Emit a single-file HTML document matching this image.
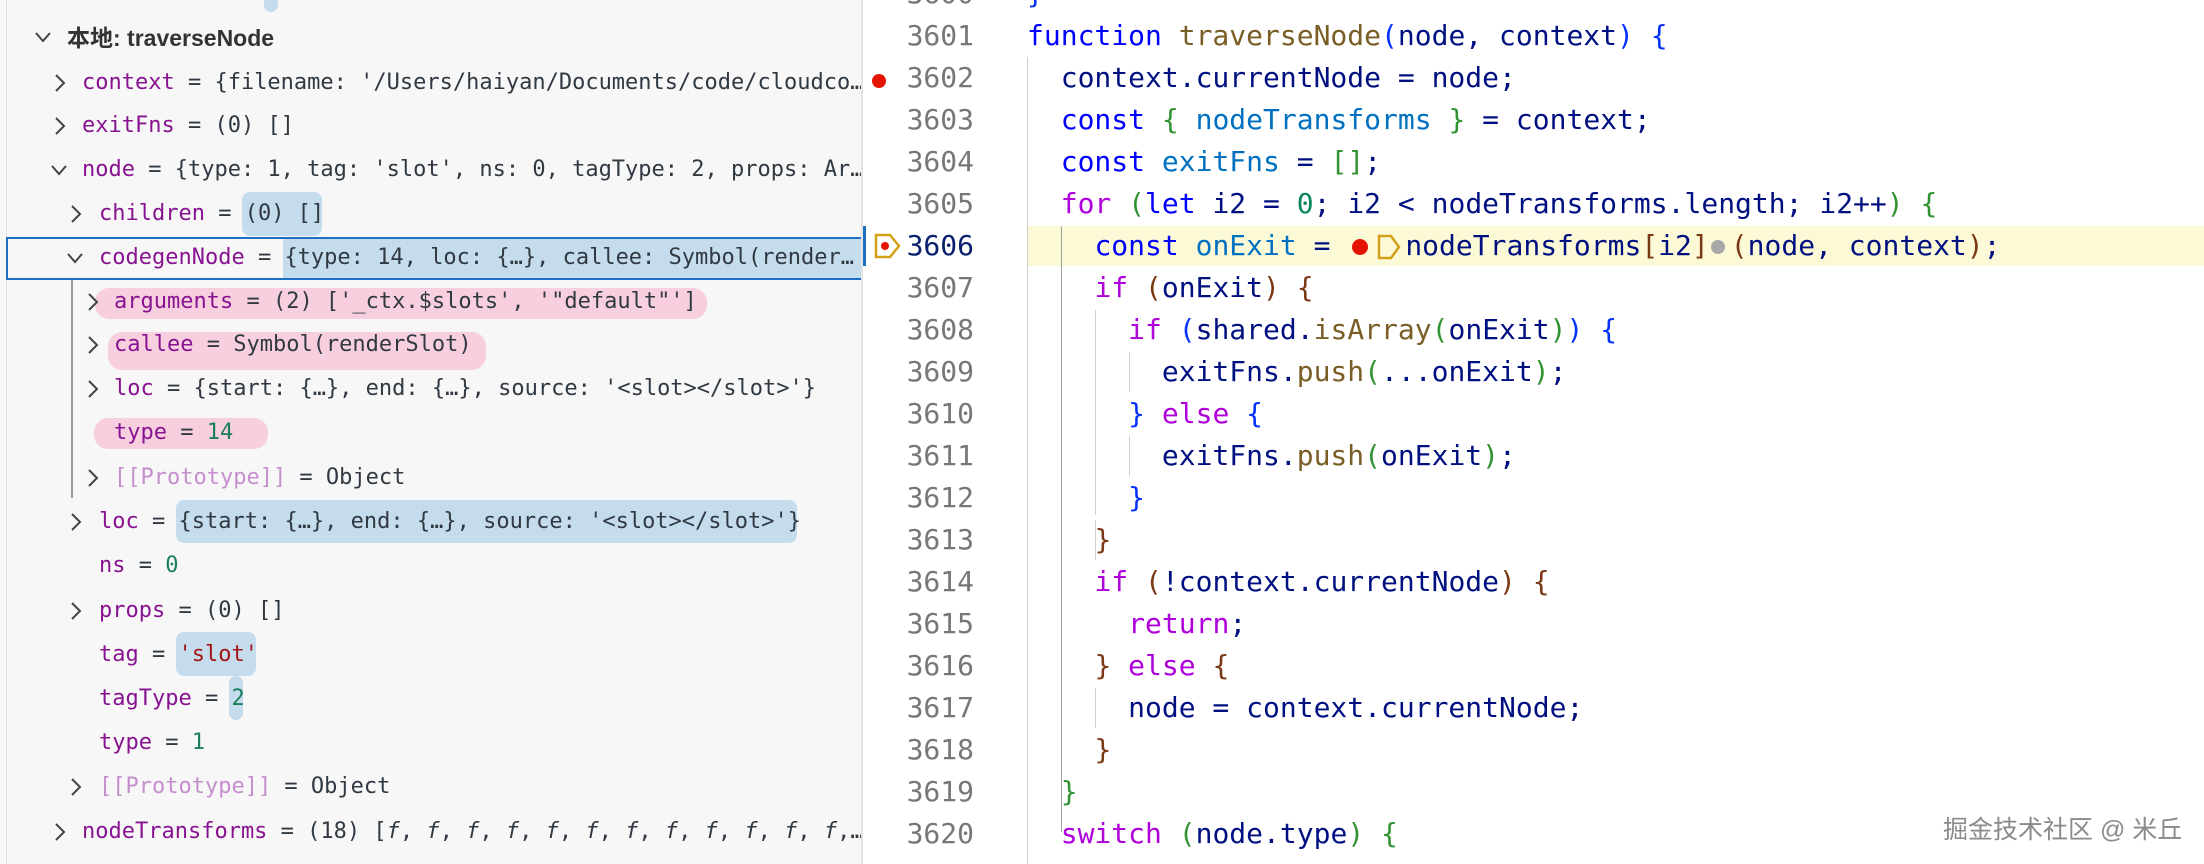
<!DOCTYPE html>
<html><head><meta charset="utf-8"><style>
*{margin:0;padding:0;box-sizing:border-box}
body{width:2204px;height:864px;overflow:hidden;background:#fff;position:relative;font-family:"DejaVu Sans Mono","Liberation Mono",monospace}
#left{position:absolute;left:0;top:0;width:863px;height:864px;background:#f7f7f7;border-right:2px solid #e4e4e4;overflow:hidden}
.r{position:absolute;height:44px;line-height:44px;font-size:22px;white-space:pre;color:#303942}
.n{color:#881391}.p{color:#c58fcd}.g{color:#1a7f5a}.s{color:#a31515}
.hl{position:absolute;background:#c5dced;border-radius:8px}
.pk{position:absolute;background:#f8cfdf;border-radius:14px}
.ch{position:absolute;width:14px;height:20px}
.code{position:absolute;left:1027px;font-size:28px;height:42px;line-height:42px;white-space:pre;color:#001080}
.ln{position:absolute;left:890px;width:84px;text-align:right;font-size:28px;height:42px;line-height:42px;color:#777}
.k{color:#0000ff}.c{color:#af00db}.f{color:#795e26}.v{color:#0070c1}.b1{color:#0431fa}.b2{color:#319331}.b3{color:#7b3814}.num{color:#098658}
.guide{position:absolute;width:1px;background:#d0d0d0}
</style></head><body>
<div id="left">
<div style="position:absolute;left:6px;top:0;width:1px;height:864px;background:#e0e0e0"></div>
<div class="hl" style="left:264px;top:-14px;width:14px;height:26px"></div>
<div class="r" style="left:67px;top:16px;font-family:'Liberation Sans','Noto Sans CJK SC',sans-serif;font-weight:bold;font-size:23px;color:#333">本地: traverseNode</div>
<svg class="ch" style="left:34px;top:30px;width:18px;height:14px" viewBox="0 0 18 14"><polyline points="2,3 9,11 16,3" fill="none" stroke="#444" stroke-width="2"/></svg>

<div class="hl" style="left:242px;top:192px;width:80px;height:44px"></div>
<div class="hl" style="left:283px;top:237px;width:580px;height:42px;border-radius:0"></div>
<div class="hl" style="left:176px;top:500px;width:621px;height:43px"></div>
<div class="hl" style="left:176px;top:632px;width:80px;height:44px"></div>
<div class="hl" style="left:229px;top:676px;width:14px;height:44px"></div>
<div class="pk" style="left:95px;top:288px;width:612px;height:31px"></div>
<div class="pk" style="left:108px;top:332px;width:378px;height:38px"></div>
<div class="pk" style="left:94px;top:418px;width:174px;height:31px"></div>
<div style="position:absolute;left:6px;top:237px;width:857px;height:43px;border:2px solid #1f6fc5"></div>
<div style="position:absolute;left:71px;top:280px;width:2px;height:218px;background:#9a9a9a"></div>

<div class="r" style="left:82px;top:61px"><span class="n">context</span> = {filename: '/Users/haiyan/Documents/code/cloudco…</div>
<div class="r" style="left:82px;top:104px"><span class="n">exitFns</span> = (0) []</div>
<div class="r" style="left:82px;top:148px"><span class="n">node</span> = {type: 1, tag: 'slot', ns: 0, tagType: 2, props: Ar…</div>
<div class="r" style="left:99px;top:192px"><span class="n">children</span> = (0) []</div>
<div class="r" style="left:99px;top:236px"><span class="n">codegenNode</span> = {type: 14, loc: {…}, callee: Symbol(render…</div>
<div class="r" style="left:114px;top:280px"><span class="n">arguments</span> = (2) ['_ctx.$slots', '"default"']</div>
<div class="r" style="left:114px;top:323px"><span class="n">callee</span> = Symbol(renderSlot)</div>
<div class="r" style="left:114px;top:367px"><span class="n">loc</span> = {start: {…}, end: {…}, source: '&lt;slot&gt;&lt;/slot&gt;'}</div>
<div class="r" style="left:114px;top:411px"><span class="n">type</span> = <span class="g">14</span></div>
<div class="r" style="left:114px;top:456px"><span class="p">[[Prototype]]</span> = Object</div>
<div class="r" style="left:99px;top:500px"><span class="n">loc</span> = {start: {…}, end: {…}, source: '&lt;slot&gt;&lt;/slot&gt;'}</div>
<div class="r" style="left:99px;top:544px"><span class="n">ns</span> = <span class="g">0</span></div>
<div class="r" style="left:99px;top:589px"><span class="n">props</span> = (0) []</div>
<div class="r" style="left:99px;top:633px"><span class="n">tag</span> = <span class="s">'slot'</span></div>
<div class="r" style="left:99px;top:677px"><span class="n">tagType</span> = <span class="g">2</span></div>
<div class="r" style="left:99px;top:721px"><span class="n">type</span> = <span class="g">1</span></div>
<div class="r" style="left:99px;top:765px"><span class="p">[[Prototype]]</span> = Object</div>
<div class="r" style="left:82px;top:810px"><span class="n">nodeTransforms</span> = (18) [<i>f</i>, <i>f</i>, <i>f</i>, <i>f</i>, <i>f</i>, <i>f</i>, <i>f</i>, <i>f</i>, <i>f</i>, <i>f</i>, <i>f</i>, <i>f</i>,…</div>

<svg class="ch" style="left:53px;top:73px" viewBox="0 0 14 20"><polyline points="3,2 11,10 3,18" fill="none" stroke="#444" stroke-width="2"/></svg>
<svg class="ch" style="left:53px;top:116px" viewBox="0 0 14 20"><polyline points="3,2 11,10 3,18" fill="none" stroke="#444" stroke-width="2"/></svg>
<svg class="ch" style="left:50px;top:163px;width:18px;height:14px" viewBox="0 0 18 14"><polyline points="2,3 9,11 16,3" fill="none" stroke="#444" stroke-width="2"/></svg>
<svg class="ch" style="left:69px;top:204px" viewBox="0 0 14 20"><polyline points="3,2 11,10 3,18" fill="none" stroke="#444" stroke-width="2"/></svg>
<svg class="ch" style="left:66px;top:251px;width:18px;height:14px" viewBox="0 0 18 14"><polyline points="2,3 9,11 16,3" fill="none" stroke="#444" stroke-width="2"/></svg>
<svg class="ch" style="left:86px;top:292px" viewBox="0 0 14 20"><polyline points="3,2 11,10 3,18" fill="none" stroke="#444" stroke-width="2"/></svg>
<svg class="ch" style="left:86px;top:335px" viewBox="0 0 14 20"><polyline points="3,2 11,10 3,18" fill="none" stroke="#444" stroke-width="2"/></svg>
<svg class="ch" style="left:86px;top:379px" viewBox="0 0 14 20"><polyline points="3,2 11,10 3,18" fill="none" stroke="#444" stroke-width="2"/></svg>
<svg class="ch" style="left:86px;top:468px" viewBox="0 0 14 20"><polyline points="3,2 11,10 3,18" fill="none" stroke="#444" stroke-width="2"/></svg>
<svg class="ch" style="left:69px;top:512px" viewBox="0 0 14 20"><polyline points="3,2 11,10 3,18" fill="none" stroke="#444" stroke-width="2"/></svg>
<svg class="ch" style="left:69px;top:601px" viewBox="0 0 14 20"><polyline points="3,2 11,10 3,18" fill="none" stroke="#444" stroke-width="2"/></svg>
<svg class="ch" style="left:69px;top:777px" viewBox="0 0 14 20"><polyline points="3,2 11,10 3,18" fill="none" stroke="#444" stroke-width="2"/></svg>
<svg class="ch" style="left:53px;top:822px" viewBox="0 0 14 20"><polyline points="3,2 11,10 3,18" fill="none" stroke="#444" stroke-width="2"/></svg>
</div>

<div style="position:absolute;left:1027px;top:226px;width:1177px;height:40px;background:#fcfad6"></div>
<div style="position:absolute;left:863px;top:226px;width:3px;height:40px;background:#1f6fc5"></div>
<div class="guide" style="left:1027px;top:57px;height:807px"></div>
<div class="guide" style="left:1061px;top:226px;height:606px;background:#a0a0a0"></div>
<div class="guide" style="left:1095px;top:310px;height:205px"></div>
<div class="guide" style="left:1095px;top:520px;height:40px"></div>
<div class="guide" style="left:1095px;top:688px;height:40px"></div>
<div class="guide" style="left:1129px;top:352px;height:40px"></div>
<div class="guide" style="left:1129px;top:436px;height:40px"></div>

<svg style="position:absolute;left:870px;top:72px" width="18" height="18"><circle cx="9" cy="9" r="7" fill="#e51400"/></svg>
<svg style="position:absolute;left:873px;top:232px" width="30" height="28" viewBox="0 0 30 28"><path d="M3 3 H17 L26 14 L17 25 H3 Z" fill="none" stroke="#d4a017" stroke-width="2.5"/><circle cx="12" cy="14" r="4" fill="#e51400"/></svg>

<div class="ln" style="top:-27px">3600</div>
<div class="ln" style="top:15px">3601</div>
<div class="ln" style="top:57px">3602</div>
<div class="ln" style="top:99px">3603</div>
<div class="ln" style="top:141px">3604</div>
<div class="ln" style="top:183px">3605</div>
<div class="ln" style="top:225px;color:#0b216f">3606</div>
<div class="ln" style="top:267px">3607</div>
<div class="ln" style="top:309px">3608</div>
<div class="ln" style="top:351px">3609</div>
<div class="ln" style="top:393px">3610</div>
<div class="ln" style="top:435px">3611</div>
<div class="ln" style="top:477px">3612</div>
<div class="ln" style="top:519px">3613</div>
<div class="ln" style="top:561px">3614</div>
<div class="ln" style="top:603px">3615</div>
<div class="ln" style="top:645px">3616</div>
<div class="ln" style="top:687px">3617</div>
<div class="ln" style="top:729px">3618</div>
<div class="ln" style="top:771px">3619</div>
<div class="ln" style="top:813px">3620</div>

<div class="code" style="top:-27px"><span class="b1">}</span></div>
<div class="code" style="top:15px"><span class="k">function</span> <span class="f">traverseNode</span><span class="b1">(</span>node, context<span class="b1">)</span> <span class="b1">{</span></div>
<div class="code" style="top:57px">  context.currentNode = node;</div>
<div class="code" style="top:99px">  <span class="k">const</span> <span class="b2">{</span> <span class="v">nodeTransforms</span> <span class="b2">}</span> = context;</div>
<div class="code" style="top:141px">  <span class="k">const</span> <span class="v">exitFns</span> = <span class="b2">[]</span>;</div>
<div class="code" style="top:183px">  <span class="c">for</span> <span class="b2">(</span><span class="k">let</span> i2 = <span class="num">0</span>; i2 &lt; nodeTransforms.length; i2++<span class="b2">)</span> <span class="b2">{</span></div>
<div class="code" style="top:225px">    <span class="k">const</span> <span class="v">onExit</span> = <span style="display:inline-block;width:28px;height:20px;vertical-align:middle;position:relative"><span style="position:absolute;left:5px;top:2px;width:16px;height:16px;border-radius:50%;background:#e51400"></span></span><svg width="30" height="28" viewBox="0 0 30 28" style="vertical-align:middle"><path d="M4 3 H16 L24 14 L16 25 H4 Z" fill="none" stroke="#d4a017" stroke-width="2.5"/></svg>nodeTransforms<span class="b3">[</span>i2<span class="b3">]</span><span style="display:inline-block;width:22px;height:20px;vertical-align:middle;position:relative"><span style="position:absolute;left:2px;top:3px;width:14px;height:14px;border-radius:50%;background:#a8a8a8"></span></span><span class="b3">(</span>node, context<span class="b3">)</span>;</div>
<div class="code" style="top:267px">    <span class="c">if</span> <span class="b3">(</span>onExit<span class="b3">)</span> <span class="b3">{</span></div>
<div class="code" style="top:309px">      <span class="c">if</span> <span class="b1">(</span>shared.<span class="f">isArray</span><span class="b2">(</span>onExit<span class="b2">)</span><span class="b1">)</span> <span class="b1">{</span></div>
<div class="code" style="top:351px">        exitFns.<span class="f">push</span><span class="b2">(</span>...onExit<span class="b2">)</span>;</div>
<div class="code" style="top:393px">      <span class="b1">}</span> <span class="c">else</span> <span class="b1">{</span></div>
<div class="code" style="top:435px">        exitFns.<span class="f">push</span><span class="b2">(</span>onExit<span class="b2">)</span>;</div>
<div class="code" style="top:477px">      <span class="b1">}</span></div>
<div class="code" style="top:519px">    <span class="b3">}</span></div>
<div class="code" style="top:561px">    <span class="c">if</span> <span class="b3">(</span>!context.currentNode<span class="b3">)</span> <span class="b3">{</span></div>
<div class="code" style="top:603px">      <span class="c">return</span>;</div>
<div class="code" style="top:645px">    <span class="b3">}</span> <span class="c">else</span> <span class="b3">{</span></div>
<div class="code" style="top:687px">      node = context.currentNode;</div>
<div class="code" style="top:729px">    <span class="b3">}</span></div>
<div class="code" style="top:771px">  <span class="b2">}</span></div>
<div class="code" style="top:813px">  <span class="c">switch</span> <span class="b2">(</span>node.type<span class="b2">)</span> <span class="b2">{</span></div>

<div style="position:absolute;left:1943px;top:810px;font-family:'Liberation Sans','Noto Sans CJK SC',sans-serif;font-size:25px;color:#8a8a8a;white-space:nowrap">掘金技术社区 @ 米丘</div>
</body></html>
